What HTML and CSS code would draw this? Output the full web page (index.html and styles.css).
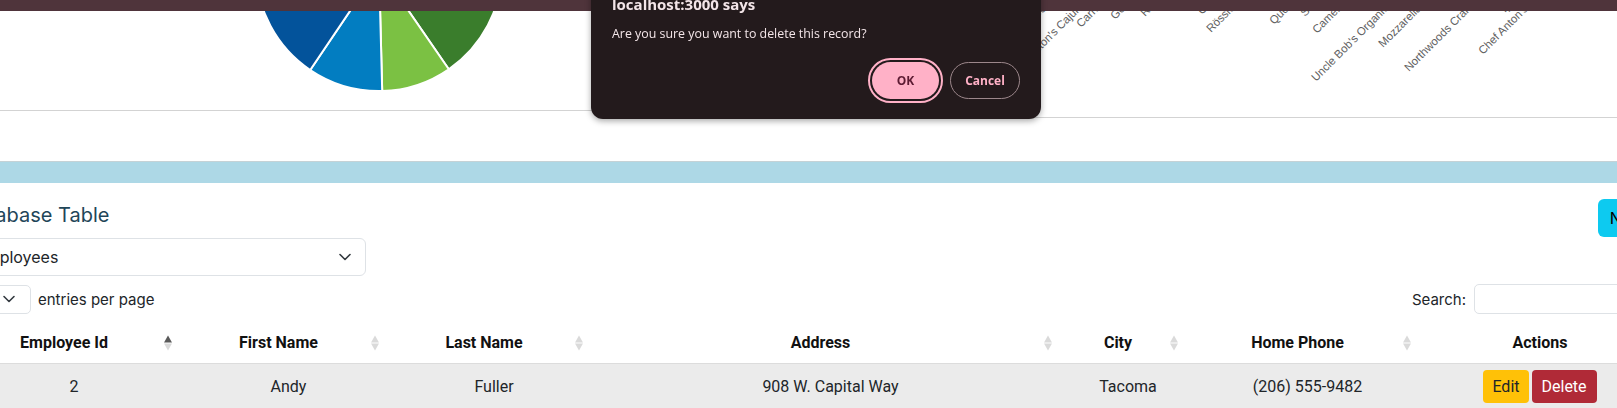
FILE: index.html
```html
<!DOCTYPE html>
<html lang="en">
<head>
<meta charset="utf-8">
<title>Database Table</title>
<link rel="stylesheet" href="styles.css">
</head>
<body>
<div class="navbar"></div>

<div class="charts">
  <div class="card card-pie">
    <svg class="chart-svg" width="808" height="110" viewBox="0 0 808 110">
      <g class="slices">
        <path d="M379,-32 L256,-32 A123,123 0 0,1 379,-155 Z" fill="#1b3f6e"/>
        <path d="M379,-32 L379,-155 A123,123 0 0,1 502,-32 Z" fill="#5aa33b"/>
        <path d="M379,-32 L502,-32 A123,123 0 0,1 448.8,69.2 Z" fill="#3a7d2c"/>
        <path d="M379,-32 L448.8,69.2 A123,123 0 0,1 382.2,91 Z" fill="#7bc143"/>
        <path d="M379,-32 L382.2,91 A123,123 0 0,1 310.2,70 Z" fill="#027dc1"/>
        <path d="M379,-32 L310.2,70 A123,123 0 0,1 256,-32 Z" fill="#03539b"/>
      </g>
    </svg>
  </div>
  <div class="card card-bar">
    <svg class="chart-svg" width="809" height="117" viewBox="808 0 809 117">
      <g class="axis-labels">
        <text x="1013" y="78" transform="rotate(-45 1013 78)">Chef Anton's Cajun Seasoning</text>
        <text x="1036" y="20" transform="rotate(-45 1036 20)">Gorgonzola Telino</text>
        <text x="1081" y="28" transform="rotate(-45 1081 28)">Carnarvon Tigers</text>
        <text x="1115" y="20" transform="rotate(-45 1115 20)">Geitost</text>
        <text x="1145" y="17" transform="rotate(-45 1145 17)">Raclette Courdavault</text>
        <text x="1202" y="15" transform="rotate(-45 1202 15)">Côte de Blaye</text>
        <text x="1211" y="33" transform="rotate(-45 1211 33)">Rössle Sauerkraut</text>
        <text x="1262" y="12" transform="rotate(-45 1262 12)">Vegie-spread</text>
        <text x="1274" y="25" transform="rotate(-45 1274 25)">Queso Cabrales</text>
        <text x="1305" y="17" transform="rotate(-45 1305 17)">Steeleye Stout</text>
        <text x="1317" y="34" transform="rotate(-45 1317 34)">Camembert Pierrot</text>
        <text x="1316" y="82" transform="rotate(-45 1316 82)">Uncle Bob's Organic Dried Pears</text>
        <text x="1383" y="48" transform="rotate(-45 1383 48)">Mozzarella di Giovanni</text>
        <text x="1409" y="72" transform="rotate(-45 1409 72)">Northwoods Cranberry Sauce</text>
        <text x="1505" y="13" transform="rotate(-45 1505 13)">Ipoh Coffee</text>
        <text x="1483" y="55" transform="rotate(-45 1483 55)">Chef Anton's Gumbo Mix</text>
        <text x="1562" y="10" transform="rotate(-45 1562 10)">Inlagd Sill</text>
      </g>
    </svg>
  </div>
</div>

<div class="band"></div>

<section class="db-section">
  <div class="db-head">
    <h2 class="db-title">Database Table</h2>
    <button class="btn btn-info">New</button>
  </div>

  <div class="fake-select table-select">
    <span>Employees</span>
    <svg class="chev" width="16" height="12" viewBox="0 0 16 12"><path d="M3 3.5 L8 8.5 L13 3.5" fill="none" stroke="#343a40" stroke-width="1.6" stroke-linecap="round" stroke-linejoin="round"/></svg>
  </div>

  <div class="dt-top">
    <div class="dt-length">
      <div class="fake-select len-select">
        <span>10</span>
        <svg class="chev" width="16" height="12" viewBox="0 0 16 12"><path d="M3 3.5 L8 8.5 L13 3.5" fill="none" stroke="#343a40" stroke-width="1.6" stroke-linecap="round" stroke-linejoin="round"/></svg>
      </div>
      <span class="dt-label">entries per page</span>
    </div>
    <div class="dt-search">
      <span class="dt-label">Search:</span>
      <div class="search-input"></div>
    </div>
  </div>

  <table class="dt-table">
    <colgroup>
      <col class="c1"><col class="c2"><col class="c3"><col class="c4"><col class="c5"><col class="c6"><col class="c7">
    </colgroup>
    <thead>
      <tr>
        <th class="sortable">Employee Id<span class="sort asc"><i class="up"></i><i class="down"></i></span></th>
        <th class="sortable">First Name<span class="sort"><i class="up"></i><i class="down"></i></span></th>
        <th class="sortable">Last Name<span class="sort"><i class="up"></i><i class="down"></i></span></th>
        <th class="sortable">Address<span class="sort"><i class="up"></i><i class="down"></i></span></th>
        <th class="sortable">City<span class="sort"><i class="up"></i><i class="down"></i></span></th>
        <th class="sortable">Home Phone<span class="sort"><i class="up"></i><i class="down"></i></span></th>
        <th>Actions</th>
      </tr>
    </thead>
    <tbody>
      <tr>
        <td>2</td>
        <td>Andy</td>
        <td>Fuller</td>
        <td>908 W. Capital Way</td>
        <td>Tacoma</td>
        <td>(206) 555-9482</td>
        <td><div class="actions"><button class="btn btn-edit">Edit</button><button class="btn btn-delete">Delete</button></div></td>
      </tr>
    </tbody>
  </table>
</section>

<div class="dialog">
  <div class="dialog-title">localhost:3000 says</div>
  <div class="dialog-msg">Are you sure you want to delete this record?</div>
  <div class="dialog-actions">
    <button class="dbtn dbtn-ok">OK</button>
    <button class="dbtn dbtn-cancel">Cancel</button>
  </div>
</div>
</body>
</html>
```

FILE: styles.css
```css
html, body {
  margin: 0;
  padding: 0;
  overflow: hidden;
  background: #ffffff;
}
body {
  width: 1617px;
  height: 408px;
  font-family: Inter, "Noto Sans", sans-serif;
  color: #212529;
  position: relative;
}

.navbar {
  position: fixed;
  top: 0;
  left: 0;
  right: 0;
  height: 11px;
  background: #4f343b;
  z-index: 10;
}

.charts {
  display: flex;
  align-items: flex-start;
}
.card {
  box-sizing: border-box;
  border-bottom: 1px solid #d3d3d3;
  overflow: hidden;
}
.card-pie {
  width: 808px;
  height: 111px;
}
.card-bar {
  width: 809px;
  height: 118px;
}
.chart-svg {
  display: block;
}
.slices path {
  stroke: #ffffff;
  stroke-width: 2;
  stroke-linejoin: round;
}
.axis-labels text {
  font-family: "Liberation Sans", Arial, sans-serif;
  font-size: 11.4px;
  fill: #606060;
}

.band {
  margin-top: 43px;
  height: 21px;
  background: #add8e6;
  border-top: 1px solid #c5d2d6;
}

.db-section {
  margin-left: -37px;
  width: 1693px;
  padding-top: 16px;
}
.db-head {
  display: flex;
  justify-content: space-between;
  align-items: center;
  height: 38px;
}
.db-title {
  margin: 0;
  font-size: 20px;
  font-weight: 400;
  color: #1f4659;
  position: relative;
  top: -3px;
}
.btn {
  font-family: Inter, "Noto Sans", sans-serif;
  border: none;
  border-radius: 6px;
  font-size: 16px;
  cursor: pointer;
}
.btn-info {
  background: #0dcaf0;
  color: #000;
  height: 38px;
  padding: 0 12px;
}

.fake-select {
  box-sizing: border-box;
  display: flex;
  align-items: center;
  justify-content: space-between;
  border: 1px solid #dee2e6;
  border-radius: 6px;
  background: #fff;
  font-size: 16px;
  color: #212529;
}
.table-select {
  margin-top: 1px;
  width: 403px;
  height: 38px;
  padding: 0 12px;
}
.chev {
  display: block;
}

.dt-top {
  display: flex;
  justify-content: space-between;
  align-items: center;
  margin-top: 8px;
  height: 30px;
}
.dt-length, .dt-search {
  display: flex;
  align-items: center;
}
.len-select {
  width: 68px;
  height: 29px;
  padding: 0 13px 0 12px;
  border-radius: 5px;
}
.dt-label {
  font-size: 15px;
  color: #212529;
}
.dt-length .dt-label {
  margin-left: 7px;
}
.dt-search .dt-label {
  margin-right: 8px;
}
.search-input {
  box-sizing: border-box;
  width: 182px;
  height: 30px;
  border: 1px solid #dee2e6;
  border-radius: 5px;
}

.dt-table {
  margin-top: 10px;
  width: 1693px;
  table-layout: fixed;
  border-collapse: collapse;
  font-family: Roboto, "Noto Sans", sans-serif;
}
.c1 { width: 222px; }
.c2 { width: 207px; }
.c3 { width: 204px; }
.c4 { width: 469px; }
.c5 { width: 126px; }
.c6 { width: 233px; }
.c7 { width: 232px; }

.dt-table th {
  position: relative;
  height: 39px;
  box-sizing: border-box;
  padding: 9px 10px;
  font-size: 16px;
  font-weight: 700;
  line-height: 20px;
  text-align: center;
  border-bottom: 1px solid #dcdcdc;
  color: #111;
}
.dt-table th.sortable {
  padding-right: 30px;
}
.sort {
  position: absolute;
  right: 13px;
  top: 50%;
  transform: translateY(-50%);
  display: flex;
  flex-direction: column;
  gap: 1px;
}
.sort i {
  display: block;
  width: 0;
  height: 0;
  border-left: 4px solid transparent;
  border-right: 4px solid transparent;
}
.sort .up {
  border-bottom: 7px solid #dadada;
}
.sort .down {
  border-top: 7px solid #dadada;
}
.sort.asc .up {
  border-bottom-color: #5a5a5a;
}
.dt-table td {
  background: #ebebeb;
  height: 45px;
  box-sizing: border-box;
  padding: 6px 10px;
  text-align: center;
  font-size: 16px;
  color: #212529;
  vertical-align: middle;
}
.actions {
  display: flex;
  justify-content: center;
  gap: 3px;
}
.btn-edit, .btn-delete {
  font-family: Roboto, "Noto Sans", sans-serif;
  height: 33px;
  border-radius: 4px;
  font-size: 16px;
}
.btn-edit {
  background: #ffc107;
  color: #212529;
  padding: 0 9px;
}
.btn-delete {
  background: #b02a37;
  color: #ffffff;
  padding: 0 10px;
}

.dialog {
  position: fixed;
  left: 591px;
  top: -10px;
  width: 450px;
  box-sizing: border-box;
  padding: 0 21px 20px 21px;
  background: #231a1c;
  border-radius: 0 0 12px 12px;
  box-shadow: 0 2px 6px rgba(0,0,0,0.35);
  z-index: 20;
  font-family: "Open Sans", "Noto Sans", sans-serif;
}
.dialog-title {
  color: #f3e5e8;
  font-size: 15px;
  font-weight: 700;
  line-height: 20px;
  padding-top: 4px;
}
.dialog-msg {
  color: #f3e5e8;
  font-size: 12.4px;
  line-height: 16px;
  margin-top: 12px;
}
.dialog-actions {
  display: flex;
  justify-content: flex-end;
  align-items: center;
  gap: 11px;
  margin-top: 20px;
}
.dbtn {
  font-family: "Open Sans", "Noto Sans", sans-serif;
  font-size: 12px;
  font-weight: 700;
  height: 37px;
  border-radius: 19px;
  cursor: pointer;
}
.dbtn-ok {
  width: 67px;
  background: #ffb1c7;
  color: #5c1a32;
  border: none;
  outline: 2px solid #ffb1c7;
  outline-offset: 2px;
}
.dbtn-cancel {
  width: 70px;
  background: transparent;
  color: #ffb1c7;
  border: 1px solid #9c878b;
}
```
